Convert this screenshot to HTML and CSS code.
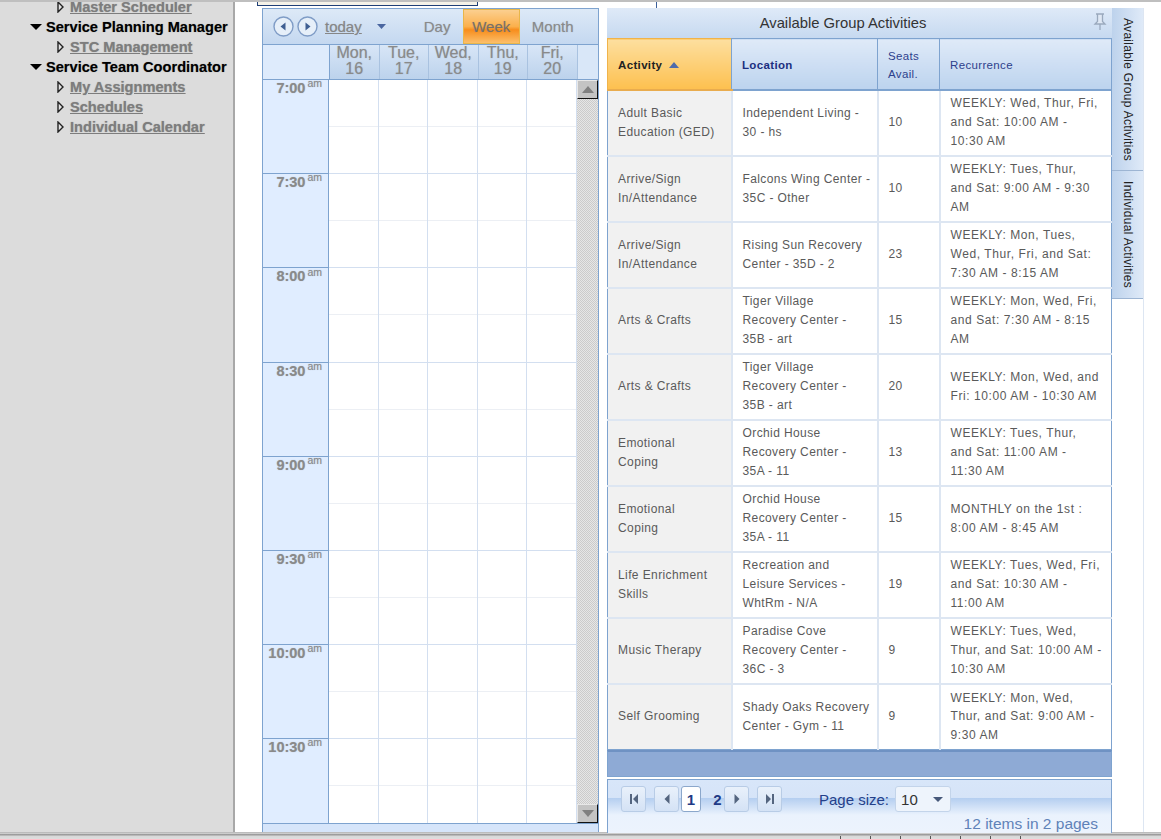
FILE: index.html
```html
<!DOCTYPE html>
<html lang="en">
<head>
  <meta charset="UTF-8">
  <title>Scheduler</title>
  <link rel="stylesheet" href="styles.css">
</head>
<body>
  <div class="page">
    <div class="main">

      <!-- LEFT MENU -->
      <nav class="sidebar">
        <div class="tree-row sub"><svg class="arrow-right" width="7" height="12" viewBox="0 0 7 12"><path d="M1 1v10l5-5z" fill="#e4e4e4" stroke="#222" stroke-width="1.400"/></svg><a href="#">Master Scheduler</a></div>
        <div class="tree-row"><span class="arrow-down"></span><b>Service Planning Manager</b></div>
        <div class="tree-row sub"><svg class="arrow-right" width="7" height="12" viewBox="0 0 7 12"><path d="M1 1v10l5-5z" fill="#e4e4e4" stroke="#222" stroke-width="1.400"/></svg><a href="#">STC Management</a></div>
        <div class="tree-row"><span class="arrow-down"></span><b>Service Team Coordinator</b></div>
        <div class="tree-row sub"><svg class="arrow-right" width="7" height="12" viewBox="0 0 7 12"><path d="M1 1v10l5-5z" fill="#e4e4e4" stroke="#222" stroke-width="1.400"/></svg><a href="#">My Assignments</a></div>
        <div class="tree-row sub"><svg class="arrow-right" width="7" height="12" viewBox="0 0 7 12"><path d="M1 1v10l5-5z" fill="#e4e4e4" stroke="#222" stroke-width="1.400"/></svg><a href="#">Schedules</a></div>
        <div class="tree-row sub"><svg class="arrow-right" width="7" height="12" viewBox="0 0 7 12"><path d="M1 1v10l5-5z" fill="#e4e4e4" stroke="#222" stroke-width="1.400"/></svg><a href="#">Individual Calendar</a></div>
      </nav>

      <div class="workspace">
        <div class="popup-edge"></div>
        <div class="top-tick"></div>

        <!-- CALENDAR -->
        <section class="calendar">
          <div class="cal-toolbar">
            <button class="round-btn">
              <svg width="21" height="21" viewBox="0 0 21 21"><circle cx="10.500" cy="10.500" r="9.500" fill="#e6eff9" stroke="#7f9cc6" stroke-width="1.400"/><path d="M12.500 6.500v8l-5-4z" fill="#3f5f92"/></svg>
            </button>
            <button class="round-btn">
              <svg width="21" height="21" viewBox="0 0 21 21"><circle cx="10.500" cy="10.500" r="9.500" fill="#e6eff9" stroke="#7f9cc6" stroke-width="1.400"/><path d="M8.500 6.500v8l5-4z" fill="#3f5f92"/></svg>
            </button>
            <a class="today" href="#">today</a>
            <svg class="today-caret" width="9" height="5" viewBox="0 0 9 5"><path d="M0 0h9L4.500 5z" fill="#4a66a0"/></svg>
            <span class="view-tab day-tab">Day</span>
            <span class="view-tab week-tab">Week</span>
            <span class="view-tab month-tab">Month</span>
          </div>

          <div class="cal-head">
            <div class="head-gutter"></div>
            <div class="head-day">Mon,<br>16</div>
            <div class="head-day">Tue,<br>17</div>
            <div class="head-day">Wed,<br>18</div>
            <div class="head-day">Thu,<br>19</div>
            <div class="head-day">Fri,<br>20</div>
            <div class="head-end"></div>
          </div>

          <div class="cal-body">
            <div class="cal-rows">
              <div class="cal-row"><div class="time">7:00<sup>am</sup></div><div class="slot"></div><div class="slot"></div><div class="slot"></div><div class="slot"></div><div class="slot"></div></div>
              <div class="cal-row"><div class="time">7:30<sup>am</sup></div><div class="slot"></div><div class="slot"></div><div class="slot"></div><div class="slot"></div><div class="slot"></div></div>
              <div class="cal-row"><div class="time">8:00<sup>am</sup></div><div class="slot"></div><div class="slot"></div><div class="slot"></div><div class="slot"></div><div class="slot"></div></div>
              <div class="cal-row"><div class="time">8:30<sup>am</sup></div><div class="slot"></div><div class="slot"></div><div class="slot"></div><div class="slot"></div><div class="slot"></div></div>
              <div class="cal-row"><div class="time">9:00<sup>am</sup></div><div class="slot"></div><div class="slot"></div><div class="slot"></div><div class="slot"></div><div class="slot"></div></div>
              <div class="cal-row"><div class="time">9:30<sup>am</sup></div><div class="slot"></div><div class="slot"></div><div class="slot"></div><div class="slot"></div><div class="slot"></div></div>
              <div class="cal-row"><div class="time">10:00<sup>am</sup></div><div class="slot"></div><div class="slot"></div><div class="slot"></div><div class="slot"></div><div class="slot"></div></div>
              <div class="cal-row"><div class="time">10:30<sup>am</sup></div><div class="slot"></div><div class="slot"></div><div class="slot"></div><div class="slot"></div><div class="slot"></div></div>
            </div>
            <div class="scrollbar">
              <div class="scroll-btn"><svg width="12" height="7" viewBox="0 0 12 7"><path d="M0 7L6 0l6 7z" fill="#808080"/></svg></div>
              <div class="scroll-btn"><svg width="12" height="7" viewBox="0 0 12 7"><path d="M0 0l6 7 6-7z" fill="#808080"/></svg></div>
            </div>
          </div>
          <div class="cal-foot"></div>
        </section>

        <!-- ACTIVITIES -->
        <section class="activities">
          <div class="panel-title">
            <span>Available Group Activities</span>
            <svg class="pin" width="14" height="18" viewBox="0 0 14 18"><path d="M3 1h8M4.500 1.500v7L2 11h10L9.500 8.500v-7M7 11v6" fill="#dfe8f4" stroke="#9aa9bd" stroke-width="1.300"/></svg>
          </div>

          <table class="grid">
            <colgroup>
              <col class="col-activity"><col class="col-location"><col class="col-seats"><col class="col-recur">
            </colgroup>
            <thead>
              <tr>
                <th class="sorted">Activity <svg width="10" height="6" viewBox="0 0 10 6"><path d="M0 6L5 0l5 6z" fill="#4f6cab"/></svg></th>
                <th>Location</th>
                <th class="seats-head">Seats<br>Avail.</th>
                <th class="recur-head">Recurrence</th>
              </tr>
            </thead>
            <tbody>
              <tr><td>Adult Basic<br>Education (GED)</td><td>Independent Living -<br>30 - hs</td><td>10</td><td>WEEKLY: Wed, Thur, Fri,<br>and Sat: 10:00 AM -<br>10:30 AM</td></tr>
              <tr><td>Arrive/Sign<br>In/Attendance</td><td>Falcons Wing Center -<br>35C - Other</td><td>10</td><td>WEEKLY: Tues, Thur,<br>and Sat: 9:00 AM - 9:30<br>AM</td></tr>
              <tr><td>Arrive/Sign<br>In/Attendance</td><td>Rising Sun Recovery<br>Center - 35D - 2</td><td>23</td><td>WEEKLY: Mon, Tues,<br>Wed, Thur, Fri, and Sat:<br>7:30 AM - 8:15 AM</td></tr>
              <tr><td>Arts &amp; Crafts</td><td>Tiger Village<br>Recovery Center -<br>35B - art</td><td>15</td><td>WEEKLY: Mon, Wed, Fri,<br>and Sat: 7:30 AM - 8:15<br>AM</td></tr>
              <tr><td>Arts &amp; Crafts</td><td>Tiger Village<br>Recovery Center -<br>35B - art</td><td>20</td><td>WEEKLY: Mon, Wed, and<br>Fri: 10:00 AM - 10:30 AM</td></tr>
              <tr><td>Emotional<br>Coping</td><td>Orchid House<br>Recovery Center -<br>35A - 11</td><td>13</td><td>WEEKLY: Tues, Thur,<br>and Sat: 11:00 AM -<br>11:30 AM</td></tr>
              <tr><td>Emotional<br>Coping</td><td>Orchid House<br>Recovery Center -<br>35A - 11</td><td>15</td><td>MONTHLY on the 1st :<br>8:00 AM - 8:45 AM</td></tr>
              <tr><td>Life Enrichment<br>Skills</td><td>Recreation and<br>Leisure Services -<br>WhtRm - N/A</td><td>19</td><td>WEEKLY: Tues, Wed, Fri,<br>and Sat: 10:30 AM -<br>11:00 AM</td></tr>
              <tr><td>Music Therapy</td><td>Paradise Cove<br>Recovery Center -<br>36C - 3</td><td>9</td><td>WEEKLY: Tues, Wed,<br>Thur, and Sat: 10:00 AM -<br>10:30 AM</td></tr>
              <tr><td>Self Grooming</td><td>Shady Oaks Recovery<br>Center - Gym - 11</td><td>9</td><td>WEEKLY: Mon, Wed,<br>Thur, and Sat: 9:00 AM -<br>9:30 AM</td></tr>
            </tbody>
          </table>

          <div class="grid-band"></div>

          <div class="pager">
            <div class="pager-row">
              <button class="page-btn"><svg width="10" height="10" viewBox="0 0 10 10"><path d="M1 0h2v10H1zM9 0v10L4 5z" fill="#54657f"/></svg></button>
              <button class="page-btn"><svg width="6" height="10" viewBox="0 0 6 10"><path d="M5.500 0v10L.5 5z" fill="#54657f"/></svg></button>
              <span class="page-num current">1</span>
              <span class="page-num">2</span>
              <button class="page-btn"><svg width="6" height="10" viewBox="0 0 6 10"><path d="M.5 0v10l5-5z" fill="#54657f"/></svg></button>
              <button class="page-btn"><svg width="10" height="10" viewBox="0 0 10 10"><path d="M1 0v10l5-5zM7 0h2v10H7z" fill="#54657f"/></svg></button>
              <span class="size-label">Page size:</span>
              <div class="size-select">10<svg width="10" height="5" viewBox="0 0 10 5"><path d="M0 0h10L5 5z" fill="#47597a"/></svg></div>
            </div>
            <div class="pager-info">12 items in 2 pages</div>
          </div>
        </section>

        <!-- SIDE TABS -->
        <aside class="side-tabs">
          <div class="side-tab tab-group">Available Group Activities</div>
          <div class="side-tab tab-indiv">Individual Activities</div>
        </aside>
      </div>
    </div>

    <footer class="status-bar">
      <span></span><span></span><span></span><span></span><span></span><span></span><span></span>
    </footer>
  </div>
</body>
</html>
```

FILE: styles.css
```css
body {
  margin: 0;
  font-family: "Liberation Sans", Arial, sans-serif;
  background-color: white;
}

.page {
  height: 839px;
  display: flex;
  flex-direction: column;
  overflow: hidden;
  border-top: 2px solid #bfbfbf;
  box-sizing: border-box;
}

.main {
  flex: 1;
  display: flex;
  min-height: 0;
}

/* left menu */
.sidebar {
  width: 203px;
  flex-shrink: 0;
  background-color: #dcdcdc;
  border-right: 2px solid #a8a8a8;
  overflow: hidden;
  padding-left: 30px;
}

.tree-row {
  height: 20px;
  display: flex;
  align-items: center;
  font-size: 14.600px;
  white-space: nowrap;
  color: black;
}

.tree-row:first-child {
  margin-top: -5px;
}

.tree-row.sub {
  padding-left: 27px;
}

.tree-row b {
  margin-left: 4px;
  text-shadow: 0 0 1px rgba(0, 0, 0, 0.4);
}

.tree-row a {
  margin-left: 6px;
  color: #7d7d7d;
  font-weight: bold;
  text-shadow: 0 0 1px rgba(90, 90, 90, 0.5);
}

.arrow-down {
  width: 0;
  height: 0;
  border-left: 6px solid transparent;
  border-right: 6px solid transparent;
  border-top: 6px solid black;
}

.arrow-right {
  flex-shrink: 0;
}

.workspace {
  flex: 1;
  display: flex;
  align-items: stretch;
  padding: 6px 0 0 27px;
  position: relative;
  min-width: 0;
}

.popup-edge {
  position: absolute;
  left: 22px;
  top: -2px;
  width: 219px;
  height: 5px;
  background-color: #f5f2e8;
  border: 1px solid #1f3f77;
  border-top: none;
}

.top-tick {
  position: absolute;
  left: 421px;
  top: -2px;
  width: 1px;
  height: 8px;
  background-color: #3b5f9b;
}

/* calendar */
.calendar {
  width: 337px;
  flex-shrink: 0;
  display: flex;
  flex-direction: column;
  border: 1px solid #7ea3cf;
  border-bottom: none;
  box-sizing: border-box;
  background-color: white;
}

.cal-toolbar {
  height: 35px;
  display: flex;
  align-items: center;
  padding-left: 10px;
  background: linear-gradient(#dde9f7, #c4d8f0);
  border-bottom: 1px solid #7ea3cf;
  color: #8a8a8a;
  font-size: 15px;
  flex-shrink: 0;
}

.round-btn {
  width: 21px;
  height: 21px;
  padding: 0;
  margin-right: 3px;
  border: none;
  background: none;
}

.round-btn svg {
  display: block;
}

.today {
  margin-left: 4px;
  color: #868686;
  text-shadow: 0 0 1px rgba(100, 100, 100, 0.4);
}

.today-caret {
  margin-left: 15px;
}

.view-tab {
  height: 100%;
  display: flex;
  align-items: center;
  justify-content: center;
  text-shadow: 0 0 1px rgba(100, 100, 100, 0.4);
}

.day-tab {
  margin-left: 26px;
  width: 51px;
  box-sizing: border-box;
  justify-content: flex-start;
  padding-left: 12px;
}

.week-tab {
  width: 57px;
  box-sizing: border-box;
  background: linear-gradient(#fbcf8f, #fbb04c 50%, #f78d1c 60%, #fcbf6b);
  border: 1px solid #e8b64a;
  color: #77706a;
}

.month-tab {
  width: 66px;
}

.cal-head {
  height: 34px;
  display: flex;
  flex-shrink: 0;
  border-bottom: 1px solid #7ea3cf;
  background-color: #d9e7f8;
}

.head-gutter {
  width: 66px;
  background-color: #deebfc;
  border-right: 1px solid #7ea3cf;
  flex-shrink: 0;
}

.head-day {
  width: 49.500px;
  box-sizing: border-box;
  flex-shrink: 0;
  background: linear-gradient(#d8e6f7, #bcd2ec);
  border-right: 1px solid #a9c2e0;
  color: #8a8a8a;
  font-size: 16px;
  line-height: 16px;
  text-align: center;
  text-shadow: 0 0 1px rgba(100, 100, 100, 0.4);
}

.head-end {
  flex: 1;
}

.cal-body {
  flex: 1;
  display: flex;
  min-height: 0;
}

.cal-rows {
  width: 314px;
  flex-shrink: 0;
  display: flex;
  flex-direction: column;
}

.cal-row {
  height: 94.200px;
  flex-shrink: 0;
  display: flex;
  box-sizing: border-box;
  border-bottom: 1px solid #d3dff0;
}

.cal-row:last-child {
  flex: 1;
  height: auto;
  border-bottom: none;
}

.time {
  width: 66px;
  box-sizing: border-box;
  flex-shrink: 0;
  background-color: #e0edff;
  border-right: 1px solid #7ea3cf;
  box-shadow: 0 1px 0 #7ea3cf;
  text-align: right;
  padding: 0 6px 0 0;
  font-size: 14.500px;
  font-weight: bold;
  color: #8a8a8a;
  text-shadow: 0 0 1px rgba(100, 100, 100, 0.4);
}

.time sup {
  font-size: 10.500px;
  font-weight: normal;
  margin-left: 2px;
  line-height: 0;
}

.slot {
  width: 49.500px;
  box-sizing: border-box;
  flex-shrink: 0;
  border-right: 1px solid #d3dff0;
  background: linear-gradient(#eceff4, #eceff4) 0 46px / 100% 1px no-repeat;
}

.scrollbar {
  flex: 1;
  display: flex;
  flex-direction: column;
  justify-content: space-between;
  background-color: #d8d8d8;
  background-image: repeating-conic-gradient(#cbcbcb 0 25%, #e6e6e6 0 50%);
  background-size: 2px 2px;
}

.scroll-btn {
  height: 19px;
  box-sizing: border-box;
  display: flex;
  align-items: center;
  justify-content: center;
  background-color: #c4c4c4;
  border: 1px solid;
  border-color: #e8e8e8 #111 #111 #e8e8e8;
}

.cal-foot {
  height: 8px;
  flex-shrink: 0;
  background-color: #d6e5fa;
  border-top: 1px solid #7ea3cf;
}

/* activities panel */
.activities {
  width: 506px;
  margin-left: 7px;
  flex-shrink: 0;
  display: flex;
  flex-direction: column;
  box-sizing: border-box;
  padding-left: 1px;
}

.panel-title {
  height: 30px;
  flex-shrink: 0;
  display: flex;
  align-items: center;
  justify-content: center;
  position: relative;
  box-sizing: border-box;
  padding-right: 33px;
  background: linear-gradient(#dfeaf8, #c6d9f0);
  color: #333;
  font-size: 14.800px;
}

.pin {
  position: absolute;
  right: 5px;
  top: 5px;
}

.grid {
  width: 505px;
  border-collapse: collapse;
  table-layout: fixed;
  font-size: 12px;
  line-height: 18.700px;
  letter-spacing: 0.400px;
  color: #5a5a5a;
  border: 1px solid #7ea3cf;
}

.col-activity { width: 124px; }
.col-location { width: 146px; }
.col-seats { width: 62px; }

.grid th {
  height: 51px;
  padding: 3px 10px 0;
  box-sizing: border-box;
  text-align: left;
  font-size: 11.500px;
  letter-spacing: 0.350px;
  color: #1c2f80;
  background: linear-gradient(#dfeaf8, #bcd3ee);
  border: 1px solid #7ea3cf;
  border-bottom-width: 2px;
}

.grid th.sorted {
  color: #222;
  background: linear-gradient(#fddf9f, #fdc04f);
  border-color: #f0b34a #7ea3cf #e9ac4e #f0b34a;
}

.sorted svg {
  margin-left: 3px;
  vertical-align: 1px;
}

.grid th.seats-head,
.grid th.recur-head {
  font-weight: normal;
  color: #2d3f8c;
}

.grid td {
  height: 66px;
  padding: 0 10px;
  border: 1px solid #dde6f2;
  border-width: 2px 2px 0 0;
  box-sizing: border-box;
  white-space: nowrap;
}

.grid tbody tr:first-child td {
  border-top: none;
}

.grid td:first-child {
  background-color: #f1f1f1;
}

.grid td:last-child {
  border-right: none;
  letter-spacing: 0.580px;
}

.grid-band {
  width: 505px;
  height: 27px;
  flex-shrink: 0;
  box-sizing: border-box;
  background-color: #8eaad5;
  border: 1px solid #7ea3cf;
  border-top: 2px solid #6f92c3;
  margin-bottom: 2px;
}

.pager {
  width: 505px;
  flex: 1;
  box-sizing: border-box;
  border: 1px solid #7ea3cf;
  border-bottom: none;
  background: linear-gradient(#d8e6f9 0, #d6e4f8 33%, #b4cef0 34%, #eaf2fd 66%, #ecf3fd 100%);
}

.pager-row {
  display: flex;
  align-items: center;
  height: 26px;
  margin-top: 6px;
  padding-left: 13px;
}

.page-btn {
  width: 25px;
  height: 26px;
  padding: 0;
  margin-right: 8px;
  display: flex;
  align-items: center;
  justify-content: center;
  background: linear-gradient(#e9f1fb, #d4e2f5);
  border: 1px solid #b8cce6;
  border-radius: 3px;
}

.page-num {
  font-size: 15px;
  font-weight: bold;
  color: #1f3a86;
  width: 9px;
  margin-right: 2px;
  text-align: center;
}

.page-num.current {
  width: 20px;
  height: 26px;
  box-sizing: border-box;
  line-height: 25px;
  background-color: white;
  border: 1px solid #8ba7cb;
  border-radius: 3px;
  margin-right: 12px;
  margin-left: -6px;
}

.size-label {
  margin-left: 29px;
  font-size: 15px;
  color: #24408a;
}

.size-select {
  width: 56px;
  height: 26px;
  margin-left: 6px;
  box-sizing: border-box;
  display: flex;
  align-items: center;
  justify-content: space-between;
  padding: 0 7px 0 5px;
  font-size: 15px;
  color: #333;
  background-color: #eef4fc;
  border: 1px solid #c3d4ea;
  border-radius: 3px;
}

.pager-info {
  text-align: right;
  padding: 3px 13px 0 0;
  font-size: 15.500px;
  color: #5f82b8;
}

/* side tabs */
.side-tabs {
  width: 32px;
  flex-shrink: 0;
  border-right: 1px solid #dde6f2;
  box-sizing: border-box;
}

.side-tab {
  writing-mode: vertical-rl;
  box-sizing: border-box;
  width: 100%;
  display: flex;
  align-items: center;
  justify-content: center;
  font-size: 12px;
  letter-spacing: 0.300px;
  color: #222;
  background: linear-gradient(90deg, #bdd2ec, #dfeaf8);
  border-bottom: 1px solid #9db5d3;
}

.tab-group {
  height: 163px;
}

.tab-indiv {
  height: 128px;
}

/* bottom bar */
.status-bar {
  height: 7px;
  flex-shrink: 0;
  display: flex;
  justify-content: flex-end;
  gap: 29px;
  padding-right: 140px;
  box-sizing: border-box;
  background: linear-gradient(#e4e4e4, #8e8e8e 30%, #d8d8d8 50%, #dedede);
  border-top: 1px solid #bcbcbc;
}

.status-bar span {
  width: 1px;
  margin-top: 3px;
  background-color: #555;
}
```
